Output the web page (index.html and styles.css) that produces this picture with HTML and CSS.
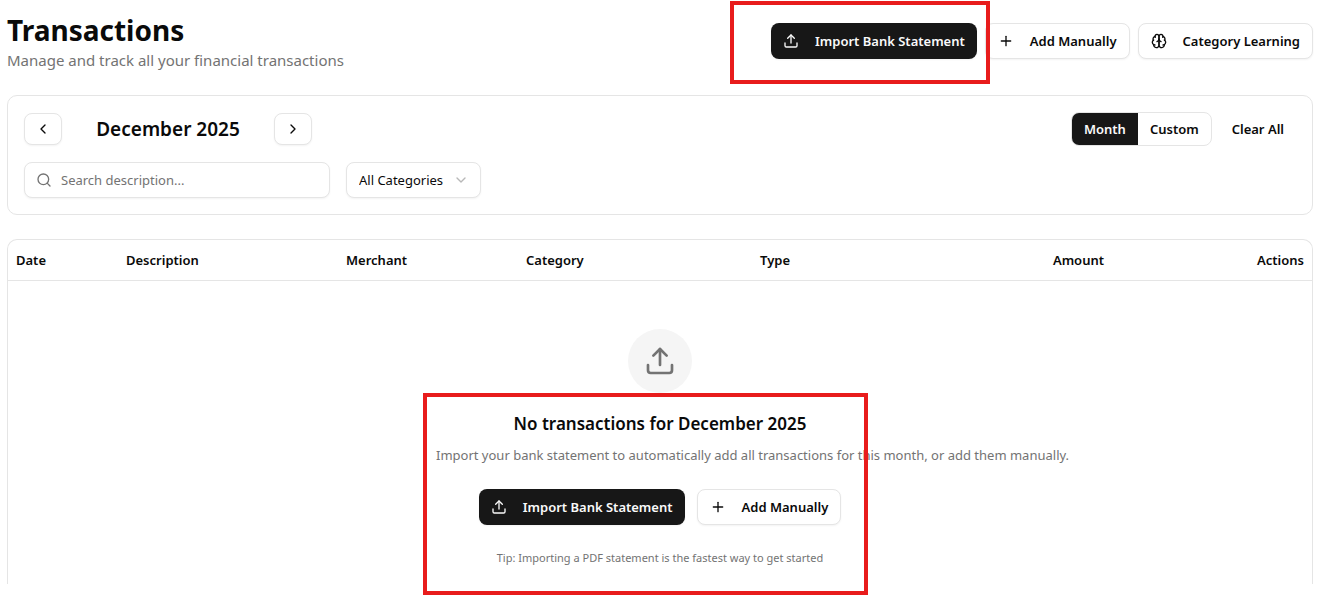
FILE: index.html
```html
<!DOCTYPE html>
<html lang="en">
<head>
  <meta charset="UTF-8">
  <meta name="viewport" content="width=device-width, initial-scale=1">
  <title>Transactions</title>
  <link rel="stylesheet" href="styles.css">
</head>
<body>

  <!-- shared icons -->
  <svg class="sprite" aria-hidden="true">
    <symbol id="icon-upload" viewBox="0 0 24 24">
      <path d="M12 3v12"/>
      <path d="m17 8-5-5-5 5"/>
      <path d="M21 15v4a2 2 0 0 1-2 2H5a2 2 0 0 1-2-2v-4"/>
    </symbol>
    <symbol id="icon-plus" viewBox="0 0 24 24">
      <path d="M5 12h14"/>
      <path d="M12 5v14"/>
    </symbol>
  </svg>

  <main class="page">
    <header class="page-header">
      <div>
        <h1>Transactions</h1>
        <p class="subtitle">Manage and track all your financial transactions</p>
      </div>
      <div class="header-actions">
        <div class="marked">
          <button type="button" class="btn btn-primary">
            <svg class="icon"><use href="#icon-upload"/></svg>
            Import Bank Statement
          </button>
          <div class="highlight highlight-header"></div>
        </div>
        <button type="button" class="btn">
          <svg class="icon"><use href="#icon-plus"/></svg>
          Add Manually
        </button>
        <button type="button" class="btn">
          <svg class="icon" viewBox="0 0 24 24">
            <path d="M12 5a3 3 0 1 0-5.997.125 4 4 0 0 0-2.526 5.77 4 4 0 0 0 .556 6.588A4 4 0 1 0 12 18Z"/>
            <path d="M12 5a3 3 0 1 1 5.997.125 4 4 0 0 1 2.526 5.77 4 4 0 0 1-.556 6.588A4 4 0 1 1 12 18Z"/>
            <path d="M15 13a4.5 4.5 0 0 1-3-4 4.5 4.5 0 0 1-3 4"/>
            <path d="M17.599 6.5a3 3 0 0 0 .399-1.375"/>
            <path d="M6.003 5.125A3 3 0 0 0 6.401 6.5"/>
            <path d="M3.477 10.896a4 4 0 0 1 .585-.396"/>
            <path d="M19.938 10.5a4 4 0 0 1 .585.396"/>
            <path d="M6 18a4 4 0 0 1-1.967-.516"/>
            <path d="M19.967 17.484A4 4 0 0 1 18 18"/>
          </svg>
          Category Learning
        </button>
      </div>
    </header>

    <section class="card filters">
      <div class="filter-row">
        <div class="month-nav">
          <button type="button" class="btn btn-nav" aria-label="Previous month">
            <svg class="icon" viewBox="0 0 24 24"><path d="m15 18-6-6 6-6"/></svg>
          </button>
          <h2>December 2025</h2>
          <button type="button" class="btn btn-nav" aria-label="Next month">
            <svg class="icon" viewBox="0 0 24 24"><path d="m9 18 6-6-6-6"/></svg>
          </button>
        </div>
        <div class="range">
          <div class="toggle">
            <button type="button" class="active">Month</button>
            <button type="button">Custom</button>
          </div>
          <button type="button" class="btn-ghost">Clear All</button>
        </div>
      </div>
      <div class="filter-grid">
        <div class="search">
          <svg class="icon" viewBox="0 0 24 24">
            <circle cx="11" cy="11" r="8"/>
            <path d="m21 21-4.3-4.3"/>
          </svg>
          <input type="text" placeholder="Search description..." aria-label="Search description">
        </div>
        <div class="select">
          <select aria-label="Category">
            <option>All Categories</option>
          </select>
          <svg class="icon" viewBox="0 0 24 24"><path d="m6 9 6 6 6-6"/></svg>
        </div>
      </div>
    </section>

    <section class="card list">
      <table>
        <thead>
          <tr>
            <th class="col-date">Date</th>
            <th class="col-description">Description</th>
            <th class="col-merchant">Merchant</th>
            <th>Category</th>
            <th class="col-type">Type</th>
            <th class="col-amount">Amount</th>
            <th class="col-actions">Actions</th>
          </tr>
        </thead>
      </table>
      <div class="empty">
        <div class="empty-icon">
          <svg class="icon"><use href="#icon-upload"/></svg>
        </div>
        <div class="empty-body marked">
          <h3>No transactions for December 2025</h3>
          <p class="empty-text">Import your bank statement to automatically add all transactions for this month, or add them manually.</p>
          <div class="empty-actions">
            <button type="button" class="btn btn-primary">
              <svg class="icon"><use href="#icon-upload"/></svg>
              Import Bank Statement
            </button>
            <button type="button" class="btn">
              <svg class="icon"><use href="#icon-plus"/></svg>
              Add Manually
            </button>
          </div>
          <p class="tip">Tip: Importing a PDF statement is the fastest way to get started</p>
          <div class="highlight highlight-empty"></div>
        </div>
      </div>
    </section>
  </main>

</body>
</html>
```
FILE: styles.css
```css
* {
  box-sizing: border-box;
  margin: 0;
  padding: 0;
}
body {
  min-height: 100vh;
  font-family: "Segoe UI", "Noto Sans", "Open Sans", sans-serif;
  font-size: 13px;
  line-height: 20px;
  color: #0a0a0a;
  background-color: #fff;
}
button, input, select {
  font: inherit;
  color: inherit;
}
button {
  cursor: pointer;
}
.sprite {
  display: none;
}
.page {
  display: flex;
  flex-direction: column;
  gap: 24px;
  padding: 11px 9px 0 7px;
}

/* icons */
.icon {
  width: 16px;
  height: 16px;
  flex-shrink: 0;
  fill: none;
  stroke: currentColor;
  stroke-width: 2;
  stroke-linecap: round;
  stroke-linejoin: round;
}

/* header */
.page-header {
  display: flex;
  justify-content: space-between;
  align-items: center;
}
h1 {
  font-size: 28px;
  line-height: 38px;
  font-weight: 700;
}
.subtitle {
  font-size: 15px;
  line-height: 22px;
  color: #737373;
}
.header-actions {
  display: flex;
  gap: 8px;
}

/* buttons */
.btn {
  display: inline-flex;
  align-items: center;
  justify-content: center;
  gap: 16px;
  height: 36px;
  padding: 0 12px;
  border: 1px solid #e5e5e5;
  border-radius: 8px;
  background-color: #fff;
  box-shadow: 0 1px 2px rgba(0, 0, 0, 0.05);
  font-weight: 600;
  white-space: nowrap;
}
.btn-primary {
  border: none;
  background-color: #171717;
  color: #fafafa;
}
.btn-nav {
  width: 38px;
  height: 32px;
}
.btn-ghost {
  height: 32px;
  padding: 0 12px;
  border: none;
  background: none;
  font-weight: 600;
}

/* cards */
.card {
  border: 1px solid #e5e5e5;
  border-radius: 10px;
}
.filters {
  display: flex;
  flex-direction: column;
  gap: 16px;
  padding: 16px;
}
.filter-row {
  display: flex;
  justify-content: space-between;
  align-items: center;
}
.month-nav {
  display: flex;
  align-items: center;
  gap: 16px;
}
h2 {
  min-width: 180px;
  font-size: 19px;
  line-height: 28px;
  font-weight: 600;
  text-align: center;
}
.range {
  display: flex;
  align-items: center;
  gap: 8px;
}
.toggle {
  display: flex;
  overflow: hidden;
  border: 1px solid #e5e5e5;
  border-radius: 8px;
}
.toggle button {
  height: 32px;
  padding: 0 12px;
  border: none;
  background: none;
  font-weight: 600;
}
.toggle .active {
  background-color: #171717;
  color: #fafafa;
}
.filter-grid {
  display: grid;
  grid-template-columns: repeat(4, 1fr);
  gap: 16px;
}
.search, .select {
  display: grid;
  align-items: center;
}
.search > *, .select > * {
  grid-area: 1 / 1;
}
.search input, .select select {
  width: 100%;
  height: 36px;
  border: 1px solid #e5e5e5;
  border-radius: 8px;
  background-color: #fff;
  box-shadow: 0 1px 2px rgba(0, 0, 0, 0.05);
}
.search .icon, .select .icon {
  z-index: 1;
  pointer-events: none;
  color: #737373;
}
.search .icon {
  margin-left: 12px;
}
.search input {
  padding: 0 12px 0 36px;
}
.search input::placeholder {
  color: #737373;
  opacity: 1;
}
.select {
  justify-self: start;
}
.select select {
  appearance: none;
  padding: 0 36px 0 12px;
}
.select .icon {
  justify-self: end;
  margin-right: 12px;
  opacity: 0.5;
}

/* table */
.list {
  border-bottom: none;
  border-radius: 10px 10px 0 0;
}
table {
  width: 100%;
  table-layout: fixed;
  border-collapse: collapse;
}
th {
  height: 40px;
  padding: 0 8px;
  font-weight: 600;
  text-align: left;
}
thead tr {
  border-bottom: 1px solid #e5e5e5;
}
.col-date {
  width: 110px;
}
.col-description {
  width: 220px;
}
.col-merchant {
  width: 180px;
}
.col-type {
  width: 160px;
}
.col-amount, .col-actions {
  width: 200px;
  text-align: right;
}

/* empty state */
.empty {
  display: flex;
  flex-direction: column;
  align-items: center;
  gap: 16px;
  padding: 48px 0 18px;
}
.empty-icon {
  display: grid;
  place-items: center;
  width: 64px;
  height: 64px;
  border-radius: 50%;
  background-color: #f5f5f5;
  color: #737373;
}
.empty-icon .icon {
  width: 32px;
  height: 32px;
}
.empty-body {
  width: 448px;
  text-align: center;
}
h3 {
  font-size: 17px;
  line-height: 30px;
  font-weight: 600;
}
.empty-text {
  margin: 6px 0 24px;
  color: #737373;
  white-space: nowrap;
}
.empty-actions {
  display: flex;
  justify-content: center;
  gap: 12px;
}
.tip {
  margin-top: 25px;
  font-size: 11px;
  line-height: 16px;
  color: #737373;
}

/* red call-out frames */
.marked {
  position: relative;
}
.highlight {
  position: absolute;
  z-index: 2;
  border: 4px solid #e81c1c;
  pointer-events: none;
}
.highlight-header {
  inset: -22px -13px -25px -41px;
}
.highlight-empty {
  inset: -16px 16px -29px -13px;
}
```
